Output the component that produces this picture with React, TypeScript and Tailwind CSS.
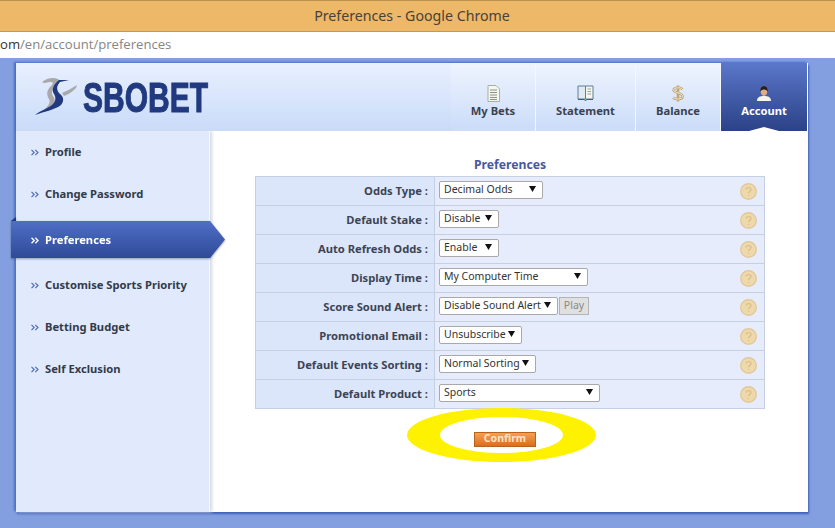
import { ReactNode } from 'react'

const rows = [
  { label: 'Odds Type :', value: 'Decimal Odds', width: 'w-[104px]' },
  { label: 'Default Stake :', value: 'Disable', width: 'w-[60px]' },
  { label: 'Auto Refresh Odds :', value: 'Enable', width: 'w-[60px]' },
  { label: 'Display Time :', value: 'My Computer Time', width: 'w-[149px]' },
  { label: 'Score Sound Alert :', value: 'Disable Sound Alert', width: 'w-[119px]', play: true },
  { label: 'Promotional Email :', value: 'Unsubscribe', width: 'w-[83px]' },
  { label: 'Default Events Sorting :', value: 'Normal Sorting', width: 'w-[97px]' },
  { label: 'Default Product :', value: 'Sports', width: 'w-[161px]' },
]

function Chevrons({ light }: { light?: boolean }) {
  return (
    <svg width="8" height="7" viewBox="0 0 8 7" fill="none" stroke={light ? '#f2f6ff' : '#4a69b8'} strokeWidth={light ? 1.5 : 1.1}>
      <path d="M0.5 0.8 L3.2 3.5 L0.5 6.2 M4.3 0.8 L7 3.5 L4.3 6.2" />
    </svg>
  )
}

function SideItem({ label }: { label: string }) {
  return (
    <div className="flex h-[42px] items-center gap-[6px] pl-[15px] text-[11.2px] font-bold text-[#333a4a]">
      <Chevrons />
      {label}
    </div>
  )
}

function NavTab({ label, icon, width, active }: { label: string; icon: ReactNode; width: string; active?: boolean }) {
  return (
    <div
      className={
        active
          ? `relative flex flex-col items-center ${width} bg-gradient-to-b from-[#5b77ca] to-[#2b4287] pt-[20px] text-[11.2px] font-bold text-white`
          : `flex flex-col items-center ${width} border-r border-[#f3f7ff] bg-gradient-to-b from-[#eff4fe] to-[#cbdcf9] pt-[20px] text-[11.2px] font-bold text-[#3a4150]`
      }
    >
      <div className="flex h-[20px] items-center">{icon}</div>
      <div className="leading-[16px]">{label}</div>
      {active && (
        <div className="absolute bottom-0 left-1/2 h-[4px] w-[30px] -translate-x-1/2 bg-white [clip-path:polygon(0_100%,50%_0,100%_100%)]" />
      )}
    </div>
  )
}

function Select({ value, width }: { value: string; width: string }) {
  return (
    <div className={`flex h-[18px] items-center justify-between rounded-[2px] border border-[#a9a9a9] bg-white pl-[4px] pr-[6px] text-[10.5px] text-[#333] ${width}`}>
      <span className="whitespace-nowrap">{value}</span>
      <svg width="7" height="6" viewBox="0 0 7 6" className="mb-[2px] shrink-0">
        <path d="M0 0 H7 L3.5 6 Z" fill="#111" />
      </svg>
    </div>
  )
}

function HelpIcon() {
  return (
    <svg width="17" height="17" viewBox="0 0 17 17" fill="none">
      <circle cx="8.5" cy="8.5" r="7.8" fill="#eed9ad" stroke="#e2c99c" strokeWidth="1.4" />
      <path d="M6 6.5 C6.5 4 11 4 11 6.6 C11 8.4 8.5 8.4 8.5 10.2 M8.5 12 V13" stroke="#dcc08c" strokeWidth="1.4" />
    </svg>
  )
}

export default function App() {
  return (
    <div className="flex h-[528px] w-[835px] flex-col overflow-hidden bg-[#839fdf] font-['Noto_Sans',sans-serif]">
      {/* window chrome */}
      <div className="flex h-[32px] shrink-0 items-center justify-center border-y border-y-[#c29a55] border-t-[#b8924f] bg-[#edb868] pr-[11px] text-[14.2px] text-[#4a4236]">
        Preferences - Google Chrome
      </div>
      <div className="flex h-[26px] shrink-0 items-center bg-white font-['Open_Sans',sans-serif] text-[13.1px] text-[#858585]">
        <span className="text-[#333]">om</span>/en/account/preferences
      </div>

      {/* page */}
      <div className="ml-[16px] mt-[5px] flex h-[449px] w-[792px] flex-col border-r border-white bg-white shadow-[-2px_-1px_2px_#4a6cc4,1px_2px_2px_#3f60b8]">
        <div className="flex h-[68px] shrink-0 justify-between bg-gradient-to-b from-[#e9f0fe] to-[#c9dbf9]">
          <div className="ml-[19px] mt-[14px] flex items-start">
            <svg width="45" height="39" viewBox="0 0 45 39" className="shrink-0">
              <path d="M7 5 C12 1 18 0 23 2 C26 4 24 8 20 11 C17 13 16 16 18 19 C21 23 20 27 15 31 L9 33 C13 29 16 26 14 22 C11 17 12 13 16 9 C19 6 18 5 15 5 C12 5 10 7 7 5 Z" fill="#a9a9ab" />
              <path d="M27 16 C32 14 37 11 42 8 L41 11 C36 16 32 18 29 19 Z" fill="#a9a9ab" />
              <path d="M34 3 L25 5 C22 8 21 12 24 16 C28 19 30 23 26 28 C20 33 10 34 0 38 C6 33 14 31 18 27 C21 24 21 20 19 17 C16 12 19 7 24 3 Z" fill="#22397f" />
            </svg>
            <span className="ml-[3px] mt-[-4px] w-[125px] origin-left scale-x-[0.715] whitespace-nowrap font-['Liberation_Sans',sans-serif] text-[42px] font-bold leading-[49px] text-[#20397f] [-webkit-text-stroke:1px_#20397f]">
              SBOBET
            </span>
          </div>
          <div className="flex">
            <NavTab
              label="My Bets"
              width="w-[85px]"
              icon={
                <svg width="13" height="17" viewBox="0 0 13 17" fill="none">
                  <path d="M1 .5 H9 L12.5 4 V16.5 H1 Z" fill="#f5f6ef" stroke="#a9b0a0" />
                  <path d="M3 5 H10 M3 7.5 H10 M3 10 H10 M3 12.5 H10 M3 14.5 H10" stroke="#8b9487" />
                </svg>
              }
            />
            <NavTab
              label="Statement"
              width="w-[100px]"
              icon={
                <svg width="17" height="16" viewBox="0 0 17 16" fill="none">
                  <path d="M1 1 H8.5 V14 H1 Z" fill="#dfeaf2" stroke="#5f7e96" />
                  <path d="M8.5 1 H16 V14 H8.5 Z" fill="#f4f5ee" stroke="#5f7e96" />
                  <path d="M1 14.5 H7 L8.5 15.5 L10 14.5 H16" stroke="#3f5f78" />
                  <path d="M10.5 4 H14 M10.5 6.5 H14 M10.5 9 H14" stroke="#9aa396" />
                </svg>
              }
            />
            <NavTab
              label="Balance"
              width="w-[85px]"
              icon={
                <svg width="12" height="17" viewBox="0 0 12 17" fill="none">
                  <path d="M10.5 4.2 C9 2.2 2 2.2 1.6 5 C1.3 7.8 10.6 7.6 10.6 11.4 C10.6 14.4 3 14.8 1.2 12.6 M6 .5 V16.5" stroke="#c2a878" strokeWidth="2.6" />
                  <path d="M10.5 4.2 C9 2.2 2 2.2 1.6 5 C1.3 7.8 10.6 7.6 10.6 11.4 C10.6 14.4 3 14.8 1.2 12.6" stroke="#f1e7d0" strokeWidth="1" />
                </svg>
              }
            />
            <NavTab
              label="Account"
              width="w-[86px]"
              active
              icon={
                <svg width="14" height="16" viewBox="0 0 14 16">
                  <path d="M0 16 C0 12 3 11 7 11 C11 11 14 12 14 16 Z" fill="#f7f3ea" />
                  <ellipse cx="7" cy="6" rx="3.4" ry="5" fill="#e0ab85" />
                  <path d="M3.2 7 C2.6 -1 11.4 -1 10.8 7 C10 3.6 4 3.6 3.2 7 Z" fill="#2a1c18" />
                </svg>
              }
            />
          </div>
        </div>

        <div className="flex flex-1">
          {/* sidebar */}
          <div className="w-[194px] shrink-0 border-r border-r-[#f4f7fd] bg-[#e0eafc] shadow-[2px_0_3px_#d3d8e2]">
            <SideItem label="Profile" />
            <SideItem label="Change Password" />
            <div className="relative -ml-[5px] mb-[6px] mt-[6px] w-[214px] drop-shadow-[0_1px_1px_rgba(60,70,100,0.5)]">
              <div className="absolute -top-[4px] left-0 h-[4px] w-[5px] bg-[#22397f] [clip-path:polygon(100%_0,100%_100%,0_100%)]" />
              <div className="flex h-[37px] items-center gap-[6px] bg-gradient-to-b from-[#4f6fc6] to-[#2f4a98] pl-[20px] pt-[1px] text-[11.2px] font-bold text-white [clip-path:polygon(0_0,93%_0,100%_50%,93%_100%,0_100%)]">
                <Chevrons light />
                Preferences
              </div>
            </div>
            <SideItem label="Customise Sports Priority" />
            <SideItem label="Betting Budget" />
            <SideItem label="Self Exclusion" />
          </div>

          {/* content */}
          <div className="flex-1 pl-[45px]">
            <div className="mt-[25px] w-[510px] text-center text-[12.2px] font-bold leading-[17px] text-[#47599c]">Preferences</div>
            <div className="mt-[3px] w-[510px] border border-[#c5d0e2]">
              {rows.map((r, i) => (
                <div key={r.label} className={`flex ${i === rows.length - 1 ? 'h-[28px]' : 'h-[29px] border-b border-[#c5d0e2]'}`}>
                  <div className="flex w-[179px] shrink-0 items-center justify-end border-r border-[#c5d0e2] bg-[#dce6fa] pr-[6px] text-[11.2px] font-bold text-[#3c4454]">
                    {r.label}
                  </div>
                  <div className="flex flex-1 items-center justify-between bg-[#e6ecfb] pl-[4px] pr-[7px]">
                    <div className="mb-[2px] flex gap-[1px]">
                      <Select value={r.value} width={r.width} />
                      {r.play && (
                        <div className="flex h-[18px] w-[30px] items-center justify-center border border-[#b4b4b4] bg-[#e0e0e0] text-[10.5px] text-[#8a8a8a]">
                          Play
                        </div>
                      )}
                    </div>
                    <HelpIcon />
                  </div>
                </div>
              ))}
            </div>
            <div className="-mt-[1px] ml-[152px] flex h-[54px] w-[189px] items-center justify-center rounded-[50%] border-x-[33px] border-y-[9px] border-[#fff200]">
              <div className="ml-[7px] mt-[8px] flex h-[15px] w-[62px] shrink-0 items-center justify-center border border-[#b8621c] bg-gradient-to-b from-[#f6a050] to-[#d96f1c] text-[10.5px] font-bold text-[#fbe3c4]">
                Confirm
              </div>
            </div>
          </div>
        </div>
      </div>
    </div>
  )
}
